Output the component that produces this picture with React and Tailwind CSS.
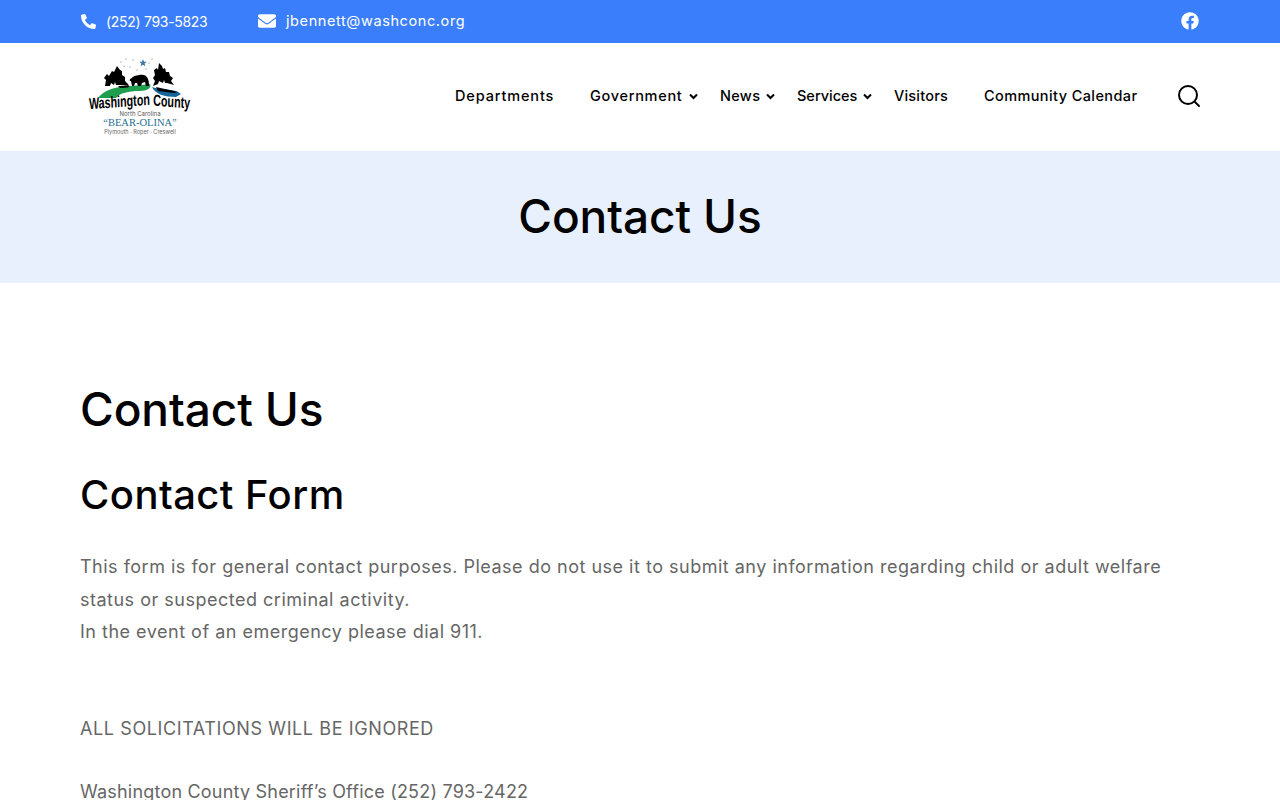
import React from "react";
import { FaPhoneAlt, FaEnvelope, FaFacebook } from "react-icons/fa";

const font = { fontFamily: "Inter, 'Noto Sans', sans-serif" };

function Chevron() {
  return (
    <svg className="w-[9px] h-[7px]" viewBox="0 0 9 7" fill="none" stroke="currentColor" strokeWidth="2">
      <path d="M1 1.500l3.500 3.500L8 1.500" />
    </svg>
  );
}

function Logo() {
  return (
    <div className="relative w-[104px] h-[80px]">
      <svg className="w-[104px] h-[42px]" viewBox="0 0 104 42">
        <path d="M10 40c6-8 18-12 34-12l18-2c2 4-3 7-10 7-12 0-20 2-24 7z" fill="#1f9e4d" />
        <path d="M64 29c8 3 22 1 29 7l-5 3c-11 0-21-3-24-10z" fill="#14659a" />
        <g fill="#000">
          <path d="M17 28l1-6-2-2 3-4 2 2 3-5 2 1 3-6 3 4 2 1 0 4 3 2 0 4 3 3 1 2-9-1-4 0-1-3-1 3-3-2-1 3z" />
          <path d="M65 28l2-5-2-3 2-3-1-5 3-2 1 2 1-7 3 3 1 3 2-1 1 4 3 0 1 4 3 2-2 3 3 4-7-2-2 0-1-3-1 3-4-2-1 3z" />
          <path d="M68 29l22 5-4 1-16-2z" />
          <path d="M44 20c2-3 5-2 7-3 4-1 8 0 9 4 1 3 1 5 1 7h-3l-1-4-3 1-1 3h-3l-1-3h-2l-1 3h-2l-1-5c-2 0-2-2 1-3z" />
          <path d="M30 28l12 0-2 1.500-8 .5z" />
        </g>
        <path d="M55 1l1 2.700 2.800.1-2.200 1.800.8 2.700-2.400-1.600-2.400 1.600.8-2.700-2.200-1.800 2.800-.1z" fill="#3b7a9e" />
        <g fill="#666">
          <circle cx="33" cy="4" r=".6" /><circle cx="38" cy="1" r=".6" /><circle cx="45" cy="2" r=".6" /><circle cx="36" cy="8" r=".6" /><circle cx="42" cy="9" r=".6" /><circle cx="49" cy="12" r=".6" /><circle cx="61" cy="5" r=".6" /><circle cx="64" cy="1" r=".6" /><circle cx="58" cy="11" r=".6" />
        </g>
      </svg>
      <div className="flex flex-col items-center -mt-[6px]">
        <div className="flex items-center justify-center h-[16px] leading-[14px] whitespace-nowrap text-[16px] font-bold scale-x-[0.67]" style={{ fontFamily: "'Liberation Sans', sans-serif" }}>
          <span className="-rotate-3">Washington</span>
          <span className="rotate-3 ml-[5px]">County</span>
        </div>
        <div className="mt-[1px] text-[6px] leading-[6px] text-[#555] whitespace-nowrap">North Carolina</div>
        <div className="text-[10.500px] leading-[12px] text-[#1f6f94] whitespace-nowrap" style={{ fontFamily: "'Liberation Serif', serif" }}>“BEAR-OLINA”</div>
        <div className="text-[5.500px] leading-[7px] text-[#666] whitespace-nowrap">Plymouth · Roper · Creswell</div>
      </div>
    </div>
  );
}

export default function App() {
  return (
    <div className="h-screen overflow-hidden bg-white text-black" style={font}>
      <div className="h-[43px] bg-[#3b7efb] text-white px-20 flex items-center justify-between">
        <div className="flex items-center text-[14.500px] -mt-[1px]">
          <FaPhoneAlt className="w-[15px] h-[15px] ml-[1px]" />
          <span className="ml-[10px] w-[101px] whitespace-nowrap text-[14px] tracking-[-0.3px]">(252) 793-5823</span>
          <FaEnvelope className="w-[18px] h-[18px] ml-[51px]" />
          <span className="ml-[10px] tracking-[0.6px]">jbennett@washconc.org</span>
        </div>
        <FaFacebook className="w-[18px] h-[18px] mr-[1px] -mt-[1px]" />
      </div>

      <div className="h-[108px] px-20 flex items-center justify-between">
        <div className="ml-[8px] mt-[2px]"><Logo /></div>
        <div className="flex items-center text-[14.500px] font-[450] -mt-[2px]">
          <span className="w-[135px] whitespace-nowrap tracking-[0.85px]">Departments</span>
          <span className="w-[99px] whitespace-nowrap tracking-[0.7px]">Government</span>
          <Chevron />
          <span className="ml-[22px] w-[46px] whitespace-nowrap tracking-[0.3px]">News</span>
          <Chevron />
          <span className="ml-[22px] w-[66px] whitespace-nowrap">Services</span>
          <Chevron />
          <span className="ml-[22px] w-[90px] whitespace-nowrap tracking-[0.2px]">Visitors</span>
          <span className="w-[193px] whitespace-nowrap tracking-[0.4px]">Community Calendar</span>
          <svg className="w-[24px] h-[24px] mr-[-1px]" viewBox="0 0 24 24" fill="none" stroke="#000" strokeWidth="2" strokeLinecap="round">
            <circle cx="11" cy="11" r="9" />
            <path d="M18 18l4 4" />
          </svg>
        </div>
      </div>

      <div className="h-[132px] bg-[#e8f0fe] flex items-center justify-center">
        <h1 className="text-[46px] font-medium tracking-[-0.1px] -mt-[2px]">Contact Us</h1>
      </div>

      <div className="px-20 pt-[96px]">
        <h1 className="text-[46px] leading-[60px] font-medium tracking-[-0.1px]">Contact Us</h1>
        <h2 className="mt-[31px] text-[40px] leading-[50px] font-medium tracking-[0.45px]">Contact Form</h2>
        <div className="mt-[31px] text-[18px] leading-[32.500px] text-[#666] tracking-[0.5px]">
          <p>This form is for general contact purposes. Please do not use it to submit any information regarding child or adult welfare status or suspected criminal activity.</p>
          <p>In the event of an emergency please dial 911.</p>
          <p className="mt-[64px] tracking-[0.6px]">ALL SOLICITATIONS WILL BE IGNORED</p>
          <p className="mt-[31px] tracking-[0.2px]">Washington County Sheriff’s Office (252) 793-2422</p>
        </div>
      </div>
    </div>
  );
}
